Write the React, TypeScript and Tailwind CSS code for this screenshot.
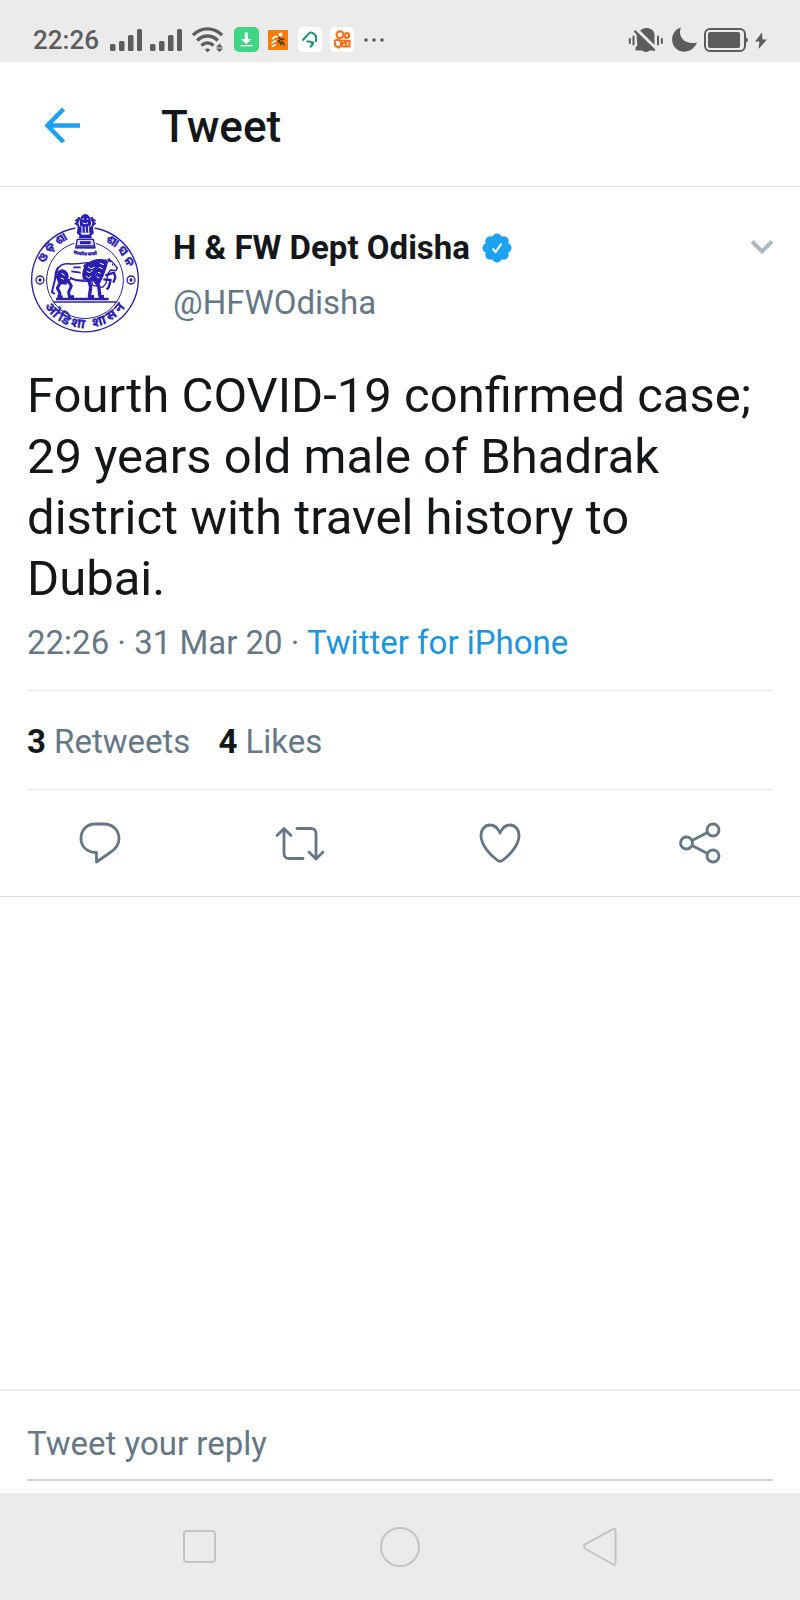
import { useState } from 'react'

const STATUS = '#5c5c5c'
const EMBLEM = '#2a1fb0'

function Signal() {
  return (
    <svg width="32" height="25" viewBox="0 0 32 25" fill={STATUS} aria-hidden="true">
      <rect x="0" y="17" width="5.5" height="7" rx="1.5" />
      <rect x="9" y="14" width="5.5" height="10" rx="1.5" />
      <rect x="18" y="8" width="5.5" height="16" rx="1.5" />
      <rect x="27" y="2" width="5" height="22" rx="1.5" />
    </svg>
  )
}

function Wifi() {
  return (
    <svg width="36" height="25" viewBox="0 0 36 25" fill="none" stroke={STATUS} strokeWidth="3.4" aria-hidden="true">
      <path d="M3 8.2C11-.2 24-.2 32 8.2" />
      <path d="M7.2 13.500c6-6 14.600-6 20.600 0" />
      <path d="M11.500 18.600c3.600-3.400 8.400-3.400 12 0" />
      <path d="M14.800 22.500c1.600-1.500 3.800-1.500 5.400 0l-2.700 3z" fill={STATUS} stroke="none" />
      <path d="M29.500 16.500l3.500 4h-7zM29.500 25l3.500-3.500h-7z" fill={STATUS} stroke="none" />
    </svg>
  )
}

function AppBadges() {
  return (
    <>
      <svg width="25" height="25" viewBox="0 0 25 25" aria-hidden="true">
        <rect width="25" height="25" rx="5" fill="#3fd585" />
        <path d="M10.800 5.500h3v6.500h3.700l-5.200 5.200L7 12h3.800z" fill="#fff" />
        <rect x="6.500" y="18" width="12" height="1.300" fill="#fff" />
      </svg>
      <svg width="23" height="25" viewBox="0 0 23 25" aria-hidden="true">
        <rect y="2" width="22" height="22" rx="1" fill="#f6efe9" />
        <rect x="1" y="3" width="20" height="20" fill="#ff7a05" />
        <circle cx="13.500" cy="7.500" r="2" fill="#fff" />
        <path d="M5 12l3.500-2.500 2.500.5M4.500 16l4.500-2.500M5 19.500l3.500-2" stroke="#fff" strokeWidth="1.700" fill="none" />
        <path d="M11.500 10.500l3 2 3-.5M10.500 14.500l5 .8 2 3M11.500 13l3 5" stroke="#4a3a2c" strokeWidth="1.700" fill="none" />
      </svg>
      <svg width="24" height="25" viewBox="0 0 24 25" fill="none" stroke="#1f9271" strokeWidth="2" aria-hidden="true">
        <rect width="24" height="25" rx="5" fill="#fff" stroke="none" />
        <path d="M4.500 13.500L11 6.300c1.700-1.800 3.500-.8 5.500 1l1.500 1.700v6" strokeLinejoin="round" />
        <path d="M8.500 14.500h3c2 .2 3 1.500 1.800 3.200M15 14.500c.2 2.500-1 4.500-3.300 5.500" />
      </svg>
      <svg width="24" height="25" viewBox="0 0 24 25" fill="none" stroke="#f4731c" strokeWidth="2.2" aria-hidden="true">
        <rect width="24" height="25" rx="5" fill="#fff" stroke="none" />
        <circle cx="10" cy="7.800" r="3.400" />
        <circle cx="16.800" cy="8.500" r="2.300" />
        <path d="M5 13.500v5l3.500 2.200 2.500-2.500v-4l-3-1.500z" />
        <path d="M11.500 13.500h3.500v2.500h-3v3.500h3M16 14h3.500v5.500H16z" />
      </svg>
      <svg width="26" height="25" viewBox="0 0 26 25" fill={STATUS} aria-hidden="true">
        <circle cx="4" cy="13" r="1.800" />
        <circle cx="12" cy="13" r="1.800" />
        <circle cx="20" cy="13" r="1.800" />
      </svg>
    </>
  )
}

function StatusBar() {
  return (
    <div className="flex justify-between bg-[#ebebeb] pt-[27px] pb-[10px] pl-[33px] pr-8">
      <div className="flex gap-2">
        <span className="mr-[3px] text-[26px] leading-[27px] -mb-0.5 font-medium text-[#5c5c5c]">22:26</span>
        <Signal />
        <Signal />
        <Wifi />
        <AppBadges />
      </div>
      <div className="flex gap-1.5">
        <svg width="36" height="25" viewBox="0 0 36 25" fill={STATUS} aria-hidden="true">
          <path d="M12 4C15-.5 26-.5 26.500 8v10L11.500 3z" />
          <path d="M8.500 7l17 16.500H7.500v-3l1.800-2zM14 23h8c-1 2.500-7 2.500-8 0z" />
          <path d="M9 3l18.500 18" stroke="#ebebeb" strokeWidth="1.800" />
          <path d="M7.200 4.500L26 22.800" stroke={STATUS} strokeWidth="2.400" strokeLinecap="round" />
          <path d="M1.800 12v4M5.500 9.500v8M30 9.500v8M33.800 12v4" stroke={STATUS} strokeWidth="2" strokeLinecap="round" />
        </svg>
        <svg width="28" height="25" viewBox="0 0 28 25" fill={STATUS} aria-hidden="true">
          <path d="M11 .5C7.500 8 13 18.500 27 15.500 22 28 5.500 27.500 2.500 15.500.8 8.500 5 2 11 .5z" />
        </svg>
        <svg width="44" height="25" viewBox="0 0 44 25" fill="none" aria-hidden="true">
          <rect x="1" y="2" width="40" height="22" rx="5" stroke={STATUS} strokeWidth="2" />
          <rect x="4" y="5" width="32" height="16" rx="2" fill={STATUS} />
          <path d="M42 10.500c2.500.5 2.500 4.500 0 5z" fill={STATUS} />
        </svg>
        <svg width="14" height="25" viewBox="0 0 14 25" fill={STATUS} aria-hidden="true">
          <path d="M8 5.500L1 14.500h4.500L4.500 22l8.500-9.500H8.500z" />
        </svg>
      </div>
    </div>
  )
}

function Emblem() {
  return (
    <svg
      className="h-[125px] w-[118px] shrink-0"
      viewBox="21 30 354 375"
      fill="none"
      stroke={EMBLEM}
      strokeWidth="4"
      role="img"
      aria-label="Odisha emblem"
    >
      <path d="M166 84a160 157 0 1 0 58 0" />
      <path d="M163 130a115 115 0 1 0 64 0" strokeWidth="3" />
      {[60, 333].map((x) => (
        <g key={x}>
          <circle cx={x} cy="240" r="12" />
          <circle cx={x} cy="240" r="5" fill={EMBLEM} stroke="none" />
        </g>
      ))}

      {/* lion capital */}
      <g>
        <path d="M182 62c0-10 7-18 14-18s14 8 14 18l5 34h-38z" fill={EMBLEM} />
        <path d="M178 52l-7 18 6 10-2 18 8 8M214 52l7 18-6 10 2 18-8 8" strokeWidth="8" />
        <path d="M165 62l14-6M227 62l-14-6M164 70l10 4M228 70l-10 4" strokeWidth="5" />
        <path d="M187 57h5M200 57h5M188 68c4 4 12 4 16 0M186 78v20M196 80v18M206 78v20M176 68l4 12M216 68l-4 12" stroke="#fff" strokeWidth="3" />
        <path d="M177 114h38l-4-9h-30z" fill={EMBLEM} strokeWidth="2" />
        <path d="M172 118h48l4 20h-56z" strokeWidth="4" fill="#dddbf5" />
        <path d="M180 128h32" strokeWidth="9" />
        <path d="M165 143h62" strokeWidth="6" />
      </g>

      {/* horse, rearing behind the lion */}
      <path d="M206 190c12-10 32-14 46-8 12-6 24 0 30 10l10 12-4 8-16-2-8 10-6 30-10 12-30-6z" fill="#fff" strokeLinejoin="round" />
      <path d="M216 190c12-14 36-14 46-4l-4 16-8 22-14 30-12-12 10-32z" fill={EMBLEM} />
      <path d="M256 226l26-8 4 14-6 16M250 238l22 2-6 22-6 6" strokeWidth="7" strokeLinejoin="round" />
      <path d="M266 186l2-8 6 8M276 194h3" strokeWidth="5" />
      <path d="M240 190l12 4M236 202l12 4M232 216l10 4M230 230l8 4" stroke="#fff" strokeWidth="3" />

      {/* lion in front */}
      <path
        d="M112 208c8-16 26-18 42-16 20 0 34-2 48-4l22 2 10 14-4 20-14 16-20 4-26-2-18-6-14 16-20-2-8-18z"
        fill="#fff"
        strokeLinejoin="round"
      />
      <path d="M116 202c-14 10-6 30-14 48l-6 26 8 6" strokeWidth="6" />
      <path d="M116 214c12-10 28 0 28 16l-6 18-20 4-6-20z" fill={EMBLEM} />
      <path d="M122 246l-10 18 8 16-4 10h12M142 238l12 20-8 18 2 14h14" strokeWidth="9" strokeLinejoin="round" />
      <path d="M206 236l6 26-4 28h14M220 236l16 22 4 32h12" strokeWidth="10" strokeLinejoin="round" />
      <path d="M192 198c8-12 28-14 38-2l4 14-8 10-6 18-14 8-16-12c-4-14 0-24 6-36z" fill={EMBLEM} />
      <path d="M150 232c16 10 30 10 44 8M154 214l28 4M160 202h22" strokeWidth="5" />
      <path d="M204 200l8 6 12-4M200 214l10 4 8-8M198 228l8 6 8-6M124 220l10 6M122 234l10 4" stroke="#fff" strokeWidth="3" />

      <path d="M108 293h158v8H108z" fill={EMBLEM} stroke="none" />
      <path d="M100 306h190" strokeWidth="4" />

      <defs>
        <path id="arc-top-left" d="M74 190a130 130 0 0 1 90-78" />
        <path id="arc-top-right" d="M256 124a128 128 0 0 1 70 98" />
        <path id="arc-motto" d="M160 160q36 14 84 0" />
        <path id="arc-bottom" d="M56 288a147 147 0 0 0 276 0" />
      </defs>
      <g fill={EMBLEM} strokeWidth="1" className="font-['Noto_Sans_Oriya','Noto_Sans','Roboto',sans-serif] font-bold">
        <text fontSize="34"><textPath href="#arc-top-left">ଓ ଡ଼ି ଶା</textPath></text>
        <text fontSize="35"><textPath href="#arc-top-right">ଶା ସ ନ</textPath></text>
        <text fontSize="14"><textPath href="#arc-motto">सत्यमेव जयते</textPath></text>
        <text fontSize="40"><textPath href="#arc-bottom" startOffset="50%" textAnchor="middle">ओ डि शा &#160; शा स न</textPath></text>
      </g>
    </svg>
  )
}

function VerifiedBadge() {
  return (
    <svg width="30" height="30" viewBox="0 0 30 30" role="img" aria-label="Verified">
      <g fill="#1da1f2">
        <circle cx="15" cy="15" r="11.500" />
        {[0, 45, 90, 135, 180, 225, 270, 315].map((a) => (
          <circle key={a} cx="15" cy="5.500" r="5" transform={`rotate(${a} 15 15)`} />
        ))}
      </g>
      <path d="M10.500 15.500l3.200 3.400 5.800-8.400" fill="none" stroke="#fff" strokeWidth="2" />
    </svg>
  )
}

const actions = [
  {
    label: 'Reply',
    icon: <path d="M17 3h9c9 0 15 6.500 15 14.500 0 7-4 11-9.500 14.500L18.500 41v-9.500C9.500 31.500 3 26 3 17.500S9 3 17 3z" />,
  },
  {
    label: 'Retweet',
    icon: (
      <path
        d="M-1 14.500L6 7.500l7 7M6 8v24c0 4 1.500 5.500 5.500 5.500H25M19 7.500h13.500c4 0 5.500 1.500 5.500 5.500v24.500M31 31l7 7 7-7"
        strokeLinecap="round"
      />
    ),
  },
  {
    label: 'Like',
    icon: <path d="M22 12C19.500 6 15.500 4 12 4 7 4 3 8.500 3 14.500c0 10 10 20 16 24.500q3 2.500 6 0c6-4.500 16-14.500 16-24.500C41 8.500 37 4 32 4c-3.500 0-7.500 2-10 8z" />,
  },
  {
    label: 'Share',
    icon: (
      <>
        <circle cx="8.500" cy="22" r="6" />
        <circle cx="35" cy="9" r="6" />
        <circle cx="35" cy="35" r="6" />
        <path d="M14 19.500l15.500-8M14 24.500l15.500 8" />
      </>
    ),
  },
]

const navButtons = [
  { label: 'Recents', icon: <rect x="6" y="6" width="31" height="31" rx="3" /> },
  { label: 'Home', icon: <circle cx="22" cy="22" r="19" /> },
  { label: 'Back', icon: <path d="M34.500 4.500c2-1.500 3-.5 3 1.500v31.500c0 2-1 3-3 1.500L7.500 24c-2-1.500-2-3.500 0-5z" /> },
]

export default function App() {
  const [reply, setReply] = useState('')

  return (
    <div className="flex min-h-screen flex-col bg-white font-['Roboto',sans-serif] text-[#14171a]">
      <StatusBar />

      {/* Header */}
      <header className="flex items-start border-b border-[#dcdfe0] pt-[39px] pb-[33px] pl-11">
        <button aria-label="Back" className="mt-1.5">
          <svg width="37" height="37" viewBox="0 0 37 37" fill="none" stroke="#1da1f2" strokeWidth="4.5">
            <path d="M36 18.500H4M19.500 2L3.500 18.500 19.500 35" />
          </svg>
        </button>
        <h1 className="ml-20 text-[44px] leading-[52px] font-medium">Tweet</h1>
      </header>

      <main className="flex-1">
        <article className="border-b border-[#dcdfe0]">
          <div className="px-[27px] pt-[23px]">
            <div className="flex items-start">
              <Emblem />
              <div className="ml-7 flex-1 pt-2.5 text-[33px] leading-[55px]">
                <div className="flex items-center gap-3">
                  <span className="font-bold">H &amp; FW Dept Odisha</span>
                  <VerifiedBadge />
                </div>
                <p className="text-[#657786]">@HFWOdisha</p>
              </div>
              <button aria-label="More" className="mt-[26px]">
                <svg width="22" height="22" viewBox="0 0 22 22" fill="none" stroke="#aab8c2" strokeWidth="4">
                  <path d="M1 5.500l10 10 10-10" />
                </svg>
              </button>
            </div>

            <p className="mt-[30px] text-[49px] leading-[61px]">
              Fourth COVID-19 confirmed case; 29 years old male of Bhadrak district with travel history to Dubai.
            </p>
            <p className="mt-3.5 text-[33px] leading-10 text-[#657786]">
              22:26 · 31 Mar 20 · <a href="#source" className="text-[#1b95e0]">Twitter for iPhone</a>
            </p>

            <div className="mt-[27px] flex gap-7 border-y border-[#e1e4e6] pt-[31px] pb-[27px] text-[33px] leading-10 text-[#657786]">
              <span><b className="text-[#14171a]">3</b> Retweets</span>
              <span><b className="text-[#14171a]">4</b> Likes</span>
            </div>
          </div>

          {/* Actions */}
          <div className="grid grid-cols-4 py-[31px]">
            {actions.map(({ label, icon }) => (
              <button key={label} aria-label={label} className="flex justify-center">
                <svg width="44" height="44" viewBox="0 0 44 44" fill="none" stroke="#657786" strokeWidth="2.8" strokeLinejoin="round" overflow="visible">
                  {icon}
                </svg>
              </button>
            ))}
          </div>
        </article>
      </main>

      {/* Reply box */}
      <div className="border-t-2 border-[#ebeced] px-[27px] pb-3">
        <input
          type="text"
          aria-label="Tweet your reply"
          placeholder="Tweet your reply"
          value={reply}
          onChange={(e) => setReply(e.target.value)}
          className="block w-full border-b-2 border-[#ccd3d9] pt-[33px] pb-[15px] text-[33px] leading-10 outline-none placeholder:text-[#657786]"
        />
      </div>

      <nav className="flex justify-center bg-[#ebebeb] pt-8 pb-[31px]">
        {navButtons.map(({ label, icon }) => (
          <button key={label} aria-label={label} className="flex w-1/4 justify-center">
            <svg width="44" height="44" viewBox="0 0 44 44" fill="none" stroke="#c4c4c4" strokeWidth="2">
              {icon}
            </svg>
          </button>
        ))}
      </nav>
    </div>
  )
}
